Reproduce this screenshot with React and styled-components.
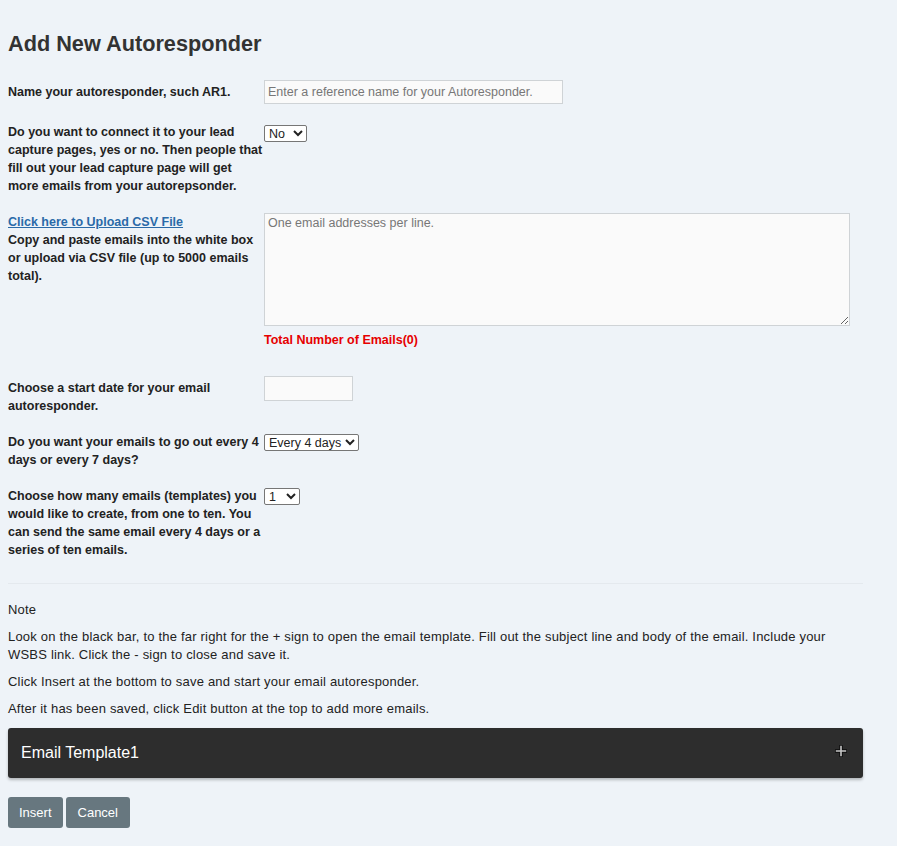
import React from 'react';
import styled, { createGlobalStyle } from 'styled-components';

const GlobalStyle = createGlobalStyle`
  body {
    margin: 0;
    background: #eef3f8;
    font-family: 'Liberation Sans', Arial, sans-serif;
    color: #222;
  }
`;

const Page = styled.div`
  width: 855px;
  padding: 32px 8px 18px;
`;

const Title = styled.h1`
  margin: 0 0 24px;
  font-size: 21.7px;
  line-height: 24px;
  font-weight: bold;
  color: #333;
`;

const Row = styled.div`
  display: grid;
  grid-template-columns: 256px 1fr;
  align-items: start;
  margin-bottom: ${p => p.gap || 18}px;
`;

const Label = styled.div`
  font-size: 12.5px;
  line-height: 18px;
  font-weight: bold;
  color: #222;
  padding-top: ${p => p.offset || 0}px;
`;

const Control = styled.div`
  display: flex;
  flex-direction: column;
  align-items: flex-start;
  padding-top: ${p => p.offset || 0}px;
`;

const UploadLink = styled.a`
  display: block;
  color: #2a6aa8;
  text-decoration: underline;
`;

const TextInput = styled.input`
  box-sizing: border-box;
  width: ${p => p.w}px;
  height: ${p => p.h}px;
  padding: 2px 3px;
  border: 1px solid #cfd3d6;
  background: #fafafa;
  font-family: 'Liberation Sans', Arial, sans-serif;
  font-size: 12.5px;
  &::placeholder { color: #777; }
`;

const TextArea = styled.textarea`
  box-sizing: border-box;
  width: 586px;
  height: 113px;
  padding: 2px 3px;
  border: 1px solid #cfd3d6;
  background: #fafafa;
  font-family: 'Liberation Sans', Arial, sans-serif;
  font-size: 12.5px;
  resize: both;
  &::placeholder { color: #777; }
`;

const Select = styled.select`
  height: 17px;
  padding: 0;
  font-family: 'Liberation Sans', Arial, sans-serif;
  font-size: 12.5px;
  color: #222;
  background: #fff;
  border: 1px solid #767676;
  border-radius: 2px;
`;

const Counter = styled.div`
  margin-top: 6px;
  font-size: 12.5px;
  line-height: 16px;
  font-weight: bold;
  color: #e60000;
`;

const Divider = styled.hr`
  border: 0;
  border-top: 1px solid #e4e9ee;
  margin: 24px 0 17px;
`;

const NoteText = styled.p`
  margin: 0 0 9px;
  font-size: 13px;
  line-height: 18px;
  letter-spacing: 0.2px;
  color: #222;
`;

const TemplateBar = styled.div`
  display: flex;
  align-items: center;
  justify-content: space-between;
  height: 50px;
  margin-top: 10px;
  padding: 0 15px 0 13px;
  background: #2d2d2d;
  border-radius: 3px;
  box-shadow: 0 2px 3px rgba(0, 0, 0, 0.25);
  color: #fff;
  font-size: 16px;
`;

const PlusIcon = styled.svg`
  width: 14px;
  height: 14px;
  margin-top: -4px;
`;

const Actions = styled.div`
  display: flex;
  gap: 3px;
  margin-top: 19px;
`;

const Button = styled.button`
  height: 31px;
  padding: 0 ${p => p.px}px;
  border: 0;
  border-radius: 3px;
  background: #67777f;
  color: #fff;
  font-family: 'Liberation Sans', Arial, sans-serif;
  font-size: 13px;
`;

export default function App() {
  return (
    <>
      <GlobalStyle />
      <Page>
        <Title>Add New Autoresponder</Title>

        <Row gap={19}>
          <Label offset={3}>Name your autoresponder, such AR1.</Label>
          <Control>
            <TextInput w={299} h={24} placeholder="Enter a reference name for your Autoresponder." />
          </Control>
        </Row>

        <Row gap={18}>
          <Label>
            Do you want to connect it to your lead capture pages, yes or no. Then people that fill out your lead capture page will get more emails from your autorepsonder.
          </Label>
          <Control offset={2}>
            <Select defaultValue="No">
              <option>No</option>
              <option>Yes</option>
            </Select>
          </Control>
        </Row>

        <Row gap={28}>
          <Label>
            <UploadLink href="#">Click here to Upload CSV File</UploadLink>
            Copy and paste emails into the white box or upload via CSV file (up to 5000 emails total).
          </Label>
          <Control>
            <TextArea placeholder="One email addresses per line." />
            <Counter>Total Number of Emails(0)</Counter>
          </Control>
        </Row>

        <Row gap={18}>
          <Label offset={3}>Choose a start date for your email autoresponder.</Label>
          <Control>
            <TextInput w={89} h={25} />
          </Control>
        </Row>

        <Row gap={18}>
          <Label>Do you want your emails to go out every 4 days or every 7 days?</Label>
          <Control offset={1}>
            <Select defaultValue="4">
              <option value="4">Every 4 days</option>
              <option value="7">Every 7 days</option>
            </Select>
          </Control>
        </Row>

        <Row gap={18}>
          <Label>
            Choose how many emails (templates) you would like to create, from one to ten. You can send the same email every 4 days or a series of ten emails.
          </Label>
          <Control offset={1}>
            <Select defaultValue="1">
              {[1, 2, 3, 4, 5, 6, 7, 8, 9, 10].map(n => (
                <option key={n} value={n}>{n}</option>
              ))}
            </Select>
          </Control>
        </Row>

        <Divider />

        <NoteText>Note</NoteText>
        <NoteText>
          Look on the black bar, to the far right for the + sign to open the email template. Fill out the subject line and body of the email. Include your WSBS link. Click the - sign to close and save it.
        </NoteText>
        <NoteText>Click Insert at the bottom to save and start your email autoresponder.</NoteText>
        <NoteText>After it has been saved, click Edit button at the top to add more emails.</NoteText>

        <TemplateBar>
          <span>Email Template1</span>
          <PlusIcon viewBox="0 0 14 14">
            <path d="M7 1v12M1 7h12" stroke="#0c0c0c" strokeWidth="3.4" />
            <path d="M7 1.8v10.4M1.8 7h10.4" stroke="#c8c8c8" strokeWidth="1.6" />
          </PlusIcon>
        </TemplateBar>

        <Actions>
          <Button px={11}>Insert</Button>
          <Button px={12}>Cancel</Button>
        </Actions>
      </Page>
    </>
  );
}
